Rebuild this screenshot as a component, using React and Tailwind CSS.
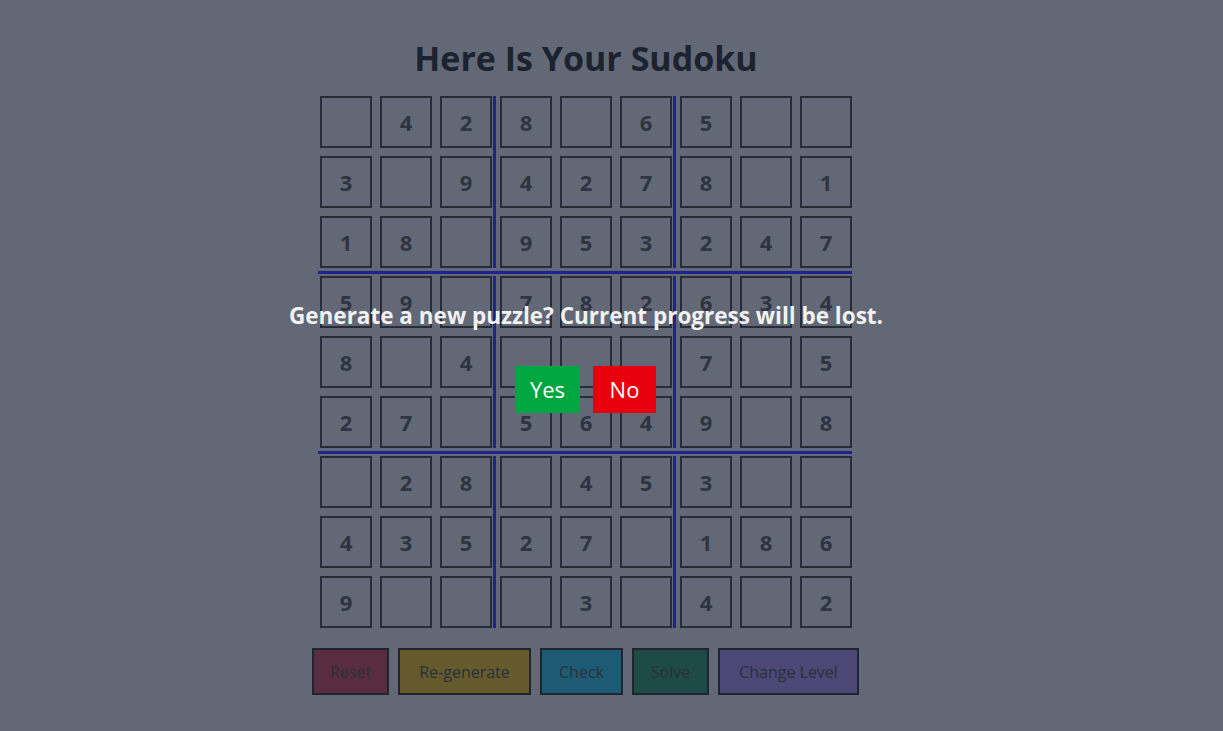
import { Fragment } from 'react';

const puzzle = [
  [0, 4, 2, 8, 0, 6, 5, 0, 0],
  [3, 0, 9, 4, 2, 7, 8, 0, 1],
  [1, 8, 0, 9, 5, 3, 2, 4, 7],
  [5, 9, 0, 7, 8, 2, 6, 3, 4],
  [8, 0, 4, 0, 0, 0, 7, 0, 5],
  [2, 7, 0, 5, 6, 4, 9, 0, 8],
  [0, 2, 8, 0, 4, 5, 3, 0, 0],
  [4, 3, 5, 2, 7, 0, 1, 8, 6],
  [9, 0, 0, 0, 3, 0, 4, 0, 2],
];

const Cell = ({ value }) => (
  <div className="w-[52px] h-[52px] border-2 border-[#272c37] flex items-center justify-center text-[22px] font-bold text-[#2e3441]">
    {value || ''}
  </div>
);

const Block = ({ br, bc }) => (
  <div className="grid grid-cols-3 gap-2">
    {[0, 1, 2].map((r) =>
      [0, 1, 2].map((c) => <Cell key={`${r}-${c}`} value={puzzle[br * 3 + r][bc * 3 + c]} />)
    )}
  </div>
);

const VLine = () => <div className="w-[3px] ml-[1px] mr-[4px] self-stretch bg-[#1f2390]" />;

const buttons = [
  { label: 'Reset', cls: 'w-[77px] bg-[#5a2c3f]' },
  { label: 'Re-generate', cls: 'w-[133px] bg-[#655a2b]' },
  { label: 'Check', cls: 'w-[83px] bg-[#1d5a73]' },
  { label: 'Solve', cls: 'w-[77px] bg-[#1e4b45]' },
  { label: 'Change Level', cls: 'w-[141px] bg-[#4c4775]' },
];

export default function App() {
  return (
    <div className="min-h-[731px] bg-[#626875] font-['Open_Sans',sans-serif] relative">
      <div className="w-[1172px] flex flex-col items-center pt-[34px]">
        <h1 className="text-[34px] leading-[48px] font-bold text-[#1b2230]">Here Is Your Sudoku</h1>
        <div className="mt-[13px] flex flex-col">
          {[0, 1, 2].map((br) => (
            <Fragment key={br}>
              {br > 0 && <div className="h-[3px] -ml-[2px] mt-[3px] mb-[2px] bg-[#1f2390]" />}
              <div className={`flex ${br === 0 ? 'pt-[1px]' : ''} ${br === 2 ? 'pb-[4px]' : ''}`}>
                <Block br={br} bc={0} />
                <VLine />
                <Block br={br} bc={1} />
                <VLine />
                <Block br={br} bc={2} />
              </div>
            </Fragment>
          ))}
        </div>
        <div className="mt-[16px] flex gap-[9px] -ml-[1px]">
          {buttons.map((b) => (
            <button
              key={b.label}
              className={`h-[47px] border-2 border-[#1f2530] text-[16px] text-[#29303c] ${b.cls}`}
            >
              {b.label}
            </button>
          ))}
        </div>
      </div>

      <div className="absolute inset-0 w-[1172px] flex flex-col items-center pt-[300px]">
        <p className="text-[22.5px] leading-[32px] font-bold text-[#f2f2f2]">
          Generate a new puzzle? Current progress will be lost.
        </p>
        <div className="mt-[34px] flex gap-[13px] -ml-[1px]">
          <button className="w-[65px] h-[47px] bg-[#00a640] text-white text-[22px]">Yes</button>
          <button className="w-[63px] h-[47px] bg-[#e8000f] text-white text-[22px]">No</button>
        </div>
      </div>
    </div>
  );
}
